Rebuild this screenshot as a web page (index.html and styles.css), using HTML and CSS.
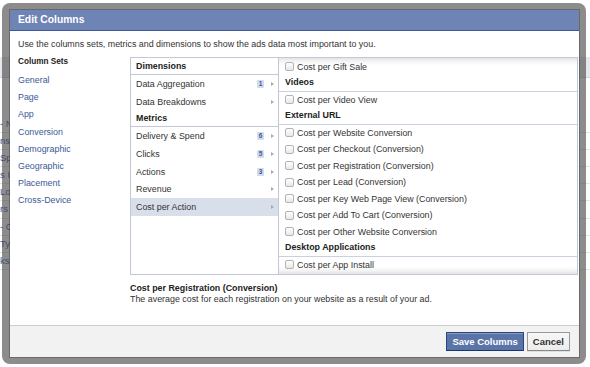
FILE: index.html
```html
<!DOCTYPE html>
<html>
<head>
<meta charset="utf-8">
<link rel="stylesheet" href="styles.css">
</head>
<body>
<div class="bg">
  <div class="bg-head"></div>
  <div class="bg-rows">
    <div class="bg-row">- N</div>
    <div class="bg-row">ns</div>
    <div class="bg-row">Sp</div>
    <div class="bg-row">s I</div>
    <div class="bg-row">Lo</div>
    <div class="bg-row">rs</div>
    <div class="bg-row">- C</div>
    <div class="bg-row">Ty</div>
    <div class="bg-row">ks</div>
  </div>
</div>

<div class="overlay">
  <div class="dialog">
    <div class="hd">Edit Columns</div>
    <div class="intro">Use the columns sets, metrics and dimensions to show the ads data most important to you.</div>
    <div class="main">
      <div class="sets">
        <div class="sets-title">Column Sets</div>
        <a href="#">General</a>
        <a href="#">Page</a>
        <a href="#">App</a>
        <a href="#">Conversion</a>
        <a href="#">Demographic</a>
        <a href="#">Geographic</a>
        <a href="#">Placement</a>
        <a href="#">Cross-Device</a>
      </div>
      <div class="right">
        <div class="picker">
          <div class="cats">
            <div class="cat-h">Dimensions</div>
            <div class="cat"><span class="name">Data Aggregation</span><span class="badge">1</span><span class="arrow"></span></div>
            <div class="cat"><span class="name">Data Breakdowns</span><span class="arrow"></span></div>
            <div class="cat-h">Metrics</div>
            <div class="cat"><span class="name">Delivery &amp; Spend</span><span class="badge">6</span><span class="arrow"></span></div>
            <div class="cat"><span class="name">Clicks</span><span class="badge">5</span><span class="arrow"></span></div>
            <div class="cat"><span class="name">Actions</span><span class="badge">3</span><span class="arrow"></span></div>
            <div class="cat"><span class="name">Revenue</span><span class="arrow"></span></div>
            <div class="cat sel"><span class="name">Cost per Action</span><span class="arrow"></span></div>
          </div>
          <div class="list">
            <label class="row"><input type="checkbox" class="cb">Cost per Gift Sale</label>
            <div class="row-h">Videos</div>
            <label class="row"><input type="checkbox" class="cb">Cost per Video View</label>
            <div class="row-h">External URL</div>
            <label class="row"><input type="checkbox" class="cb">Cost per Website Conversion</label>
            <label class="row"><input type="checkbox" class="cb">Cost per Checkout (Conversion)</label>
            <label class="row"><input type="checkbox" class="cb">Cost per Registration (Conversion)</label>
            <label class="row"><input type="checkbox" class="cb">Cost per Lead (Conversion)</label>
            <label class="row"><input type="checkbox" class="cb">Cost per Key Web Page View (Conversion)</label>
            <label class="row"><input type="checkbox" class="cb">Cost per Add To Cart (Conversion)</label>
            <label class="row"><input type="checkbox" class="cb">Cost per Other Website Conversion</label>
            <div class="row-h">Desktop Applications</div>
            <label class="row"><input type="checkbox" class="cb">Cost per App Install</label>
          </div>
        </div>
        <div class="desc">
          <div class="desc-title">Cost per Registration (Conversion)</div>
          <div>The average cost for each registration on your website as a result of your ad.</div>
        </div>
      </div>
    </div>
    <div class="ft">
      <button class="btn btn-primary">Save Columns</button>
      <button class="btn">Cancel</button>
    </div>
  </div>
</div>
</body>
</html>
```
FILE: styles.css
```css
* { box-sizing: border-box; }
html, body { margin: 0; padding: 0; }
body {
  width: 590px;
  height: 367px;
  overflow: hidden;
  position: relative;
  background: #fff;
  color: #333;
  font-family: "Liberation Sans", Arial, sans-serif;
  font-size: 8.9px;
}

/* background page behind the dialog */
.bg { padding-top: 57px; }
.bg-head {
  height: 21px;
  background: #e6e8ec;
  border-bottom: 1px solid #cfd3da;
}
.bg-rows { margin-top: 38px; }
.bg-row {
  height: 17.1px;
  line-height: 16px;
  border-bottom: 1px solid #e3e5e9;
  color: #3b5998;
  white-space: nowrap;
  font-size: 9.5px;
  padding-left: 0;
}

/* modal */
.overlay {
  position: absolute;
  left: 2px;
  top: 3px;
  width: 584px;
  height: 361px;
  padding: 7px 7px 7px 8px;
  background: rgba(70, 70, 70, 0.62);
  border-radius: 8px;
}
.dialog {
  width: 569px;
  height: 347px;
  background: #fff;
  display: flex;
  flex-direction: column;
  box-shadow: 0 0 0 1px rgba(40, 40, 40, 0.35);
}
.hd {
  height: 21px;
  flex: none;
  background: #6d84b4;
  border-bottom: 1px solid #3b5998;
  color: #fff;
  font-weight: bold;
  font-size: 10.3px;
  line-height: 20px;
  padding-left: 8px;
}
.intro {
  flex: none;
  height: 26px;
  padding: 7px 8px 0;
  line-height: 12px;
  color: #333;
}
.main {
  flex: none;
  height: 268px;
  display: flex;
}
.sets {
  width: 120px;
  flex: none;
  padding-left: 8px;
}
.sets-title {
  font-weight: bold;
  font-size: 8.2px;
  line-height: 10px;
  color: #222;
  margin-bottom: 5px;
}
.sets a {
  display: block;
  color: #3b5998;
  text-decoration: none;
  line-height: 17.2px;
}
.right {
  width: 448px;
  flex: none;
}
.picker {
  display: flex;
  height: 218px;
  border: 1px solid #c1c8d6;
}
.cats {
  width: 148px;
  flex: none;
  border-right: 1px solid #c1c8d6;
}
.cat-h {
  height: 17px;
  line-height: 16px;
  border-bottom: 1px solid #c1c8d6;
  font-weight: bold;
  color: #222;
  padding-left: 5px;
}
.cat {
  height: 17.7px;
  display: flex;
  align-items: center;
  padding: 0 3px 0 5px;
  color: #333;
}
.cat .name { flex: 1; }
.cat.sel { background: #d8dfea; }
.badge {
  width: 7px;
  height: 8px;
  background: #d4dcea;
  color: #3b5998;
  font-weight: bold;
  font-size: 6.5px;
  line-height: 8px;
  text-align: center;
  border-radius: 1px;
  margin-right: 7px;
}
.arrow {
  width: 0;
  height: 0;
  border-left: 3px solid #aaa;
  border-top: 2.5px solid transparent;
  border-bottom: 2.5px solid transparent;
  margin-right: 1px;
}
.list {
  flex: 1;
  overflow: hidden;
  padding-top: 0.5px;
  box-shadow: inset 0 7px 6px -5px rgba(0, 0, 0, 0.14), inset 0 -7px 6px -5px rgba(0, 0, 0, 0.14);
}
.row {
  height: 16.5px;
  display: flex;
  align-items: center;
  padding-left: 6px;
  color: #333;
  white-space: nowrap;
}
.cb {
  appearance: none;
  -webkit-appearance: none;
  width: 9px;
  height: 9px;
  margin: 0 3px 0 0;
  border: 1px solid #b3b3b3;
  border-radius: 2px;
  background: linear-gradient(#fff, #e8e8e8);
  flex: none;
}
.row-h {
  height: 16.5px;
  line-height: 15.5px;
  border-bottom: 1px solid #c9d0de;
  font-weight: bold;
  color: #222;
  padding-left: 6px;
}
.desc {
  padding-top: 8px;
  line-height: 11px;
  color: #333;
}
.desc-title {
  font-weight: bold;
  color: #222;
}
.ft {
  flex: none;
  height: 32px;
  border-top: 1px solid #ccc;
  background: #f2f2f2;
  display: flex;
  justify-content: flex-end;
  align-items: flex-start;
  gap: 3px;
  padding: 6px 9px 0 0;
}
.btn {
  height: 19px;
  padding: 0 5px;
  margin: 0;
  font-family: "Liberation Sans", Arial, sans-serif;
  font-weight: bold;
  font-size: 9.5px;
  color: #333;
  background: linear-gradient(#f7f7f7, #ececec);
  border: 1px solid #999;
  border-bottom-color: #888;
  box-shadow: 0 1px 0 rgba(0, 0, 0, 0.08);
}
.btn-primary {
  color: #fff;
  background: #5b74a8;
  border-color: #29447e #29447e #1a356e;
  box-shadow: inset 0 1px 0 #8a9cc2;
}
```
